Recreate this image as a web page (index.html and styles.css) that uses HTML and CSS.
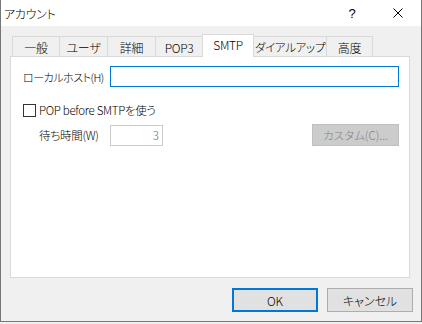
FILE: index.html
```html
<!DOCTYPE html>
<html lang="ja">
<head>
  <meta charset="UTF-8">
  <title>アカウント</title>
  <link rel="stylesheet" href="styles.css">
</head>
<body>
  <div class="dialog">
    <div class="titlebar">
      <span class="title">アカウント</span>
      <span class="caption-button help">?</span>
      <span class="caption-button close">
        <svg width="10" height="10" viewBox="0 0 10 10">
          <path d="M0.5 0.5L9.5 9.5M9.5 0.5L0.5 9.5" stroke="#000" stroke-width="1"/>
        </svg>
      </span>
    </div>

    <div class="content">
      <div class="tabs">
        <div class="tab">一般</div>
        <div class="tab">ユーザ</div>
        <div class="tab">詳細</div>
        <div class="tab">POP3</div>
        <div class="tab active">SMTP</div>
        <div class="tab">ダイアルアップ</div>
        <div class="tab">高度</div>
      </div>

      <div class="panel">
        <div class="row">
          <label class="label host-label" for="host">ローカルホスト(H)</label>
          <input type="text" id="host" class="text-input focused">
        </div>

        <div class="check-row">
          <span class="checkbox"></span>
          <span class="check-text">POP before SMTPを使う</span>
        </div>

        <div class="row wait-row">
          <label class="label wait-label" for="wait">待ち時間(W)</label>
          <input type="text" id="wait" class="text-input small disabled" value="3" disabled>
          <button class="button disabled-button" disabled>カスタム(C)...</button>
        </div>
      </div>

      <div class="actions">
        <button class="button default">OK</button>
        <button class="button">キャンセル</button>
      </div>
    </div>
  </div>
</body>
</html>
```

FILE: styles.css
```css
html {
  background: #f0f0f0;
}
body {
  margin: 0;
  font-family: "Noto Sans CJK JP", "Noto Sans", sans-serif;
  font-size: 11px;
  font-weight: 300;
  letter-spacing: -0.3px;
  font-feature-settings: "palt";
  white-space: nowrap;
  color: #000;
}
.dialog {
  width: 422px;
  height: 322px;
  box-sizing: border-box;
  border: 1px solid #777;
  border-top: none;
  background: #f0f0f0;
}
.titlebar {
  height: 26px;
  background: #fff;
  display: flex;
  align-items: center;
}
.title {
  flex: 1;
  padding-left: 3px;
  font-size: 12px;
}
.caption-button {
  width: 46px;
  height: 26px;
  display: flex;
  align-items: center;
  justify-content: center;
}
.help {
  font-size: 13px;
  font-family: "Liberation Sans", sans-serif;
}
.content {
  padding-top: 8px;
}
.tabs {
  height: 22px;
  padding-left: 11px;
  display: flex;
  align-items: flex-end;
}
.tab {
  height: 20px;
  box-sizing: border-box;
  border: 1px solid #d9d9d9;
  border-bottom: none;
  margin-left: -1px;
  display: flex;
  align-items: center;
  justify-content: center;
  padding-top: 1px;
  font-size: 12px;
}
.tab:first-child {
  margin-left: 0;
}
.tab:nth-child(1) { width: 48px; }
.tab:nth-child(2) { width: 49px; }
.tab:nth-child(3) { width: 49px; }
.tab:nth-child(4) { width: 48px; }
.tab:nth-child(5) { width: 52px; }
.tab:nth-child(6) { width: 74px; font-size: 11.5px; }
.tab:nth-child(7) { width: 47px; }
.tab.active {
  height: 23px;
  margin-bottom: -1px;
  background: #fff;
  position: relative;
  z-index: 1;
  padding-top: 0;
  padding-bottom: 3px;
}
.panel {
  margin-left: 9px;
  width: 400px;
  height: 222px;
  box-sizing: border-box;
  border: 1px solid #d9d9d9;
  background: #fff;
  padding: 9px 10px 0 12px;
  font-size: 11.5px;
}
.row {
  display: flex;
  align-items: center;
  height: 21px;
}
.label {
  flex: none;
}
.host-label {
  width: 87px;
  font-size: 11px;
  letter-spacing: -0.5px;
}
.text-input {
  font: inherit;
  height: 21px;
  box-sizing: border-box;
  border: 1px solid #7a7a7a;
  background: #fff;
  padding: 0 3px;
  margin: 0;
  outline: none;
}
.text-input.focused {
  flex: 1;
  border-color: #0078d7;
}
.text-input.small {
  width: 53px;
  text-align: right;
  border-color: #cccccc;
  color: #6d6d6d;
  background: #fff;
}
.check-row {
  display: flex;
  align-items: center;
  height: 16px;
  margin-top: 15px;
}
.checkbox {
  width: 13px;
  height: 13px;
  box-sizing: border-box;
  border: 1px solid #333;
  background: #fff;
  margin-right: 3px;
}
.wait-row {
  height: 22px;
  margin-top: 6px;
  padding-left: 16px;
}
.wait-label {
  width: 71px;
}
.button {
  font: inherit;
  width: 86px;
  height: 24px;
  box-sizing: border-box;
  border: 1px solid #adadad;
  background: #e1e1e1;
  color: #000;
  padding: 0;
  margin: 0;
}
.disabled-button {
  margin-left: auto;
  width: 87px;
  height: 22px;
  background: #cccccc;
  border-color: #bfbfbf;
  color: #838383;
}
.actions {
  display: flex;
  justify-content: flex-end;
  gap: 9px;
  margin-top: 10px;
  padding-right: 8px;
  font-size: 12px;
}
.button.default {
  border: 2px solid #0078d7;
}
```
